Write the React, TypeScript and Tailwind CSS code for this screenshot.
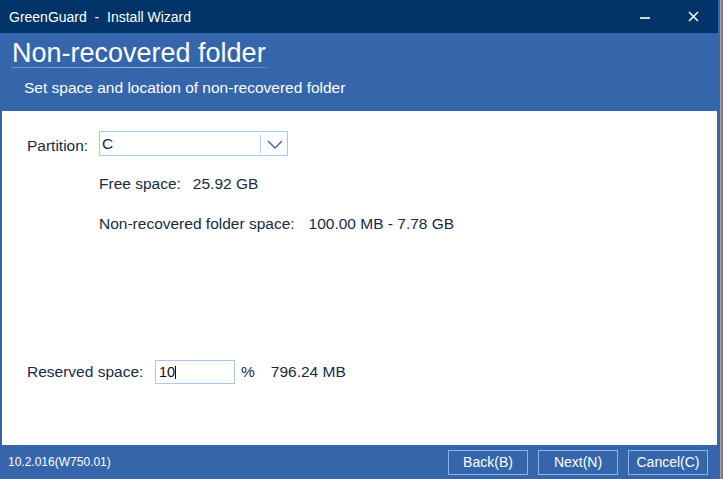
import React from "react";

export default function App() {
  const font = { fontFamily: '"Liberation Sans", Arial, sans-serif' };
  return (
    <div className="flex h-[479px] w-[723px] bg-[#7f7f7f]" style={font}>
      <div className="flex h-full w-[720px] flex-col bg-[#3566ab]">
        {/* Title bar */}
        <div className="flex h-[33px] w-[718px] shrink-0 items-center bg-[#003468] pl-[9px] text-[14px] leading-[16px] text-white">
          <span className="whitespace-pre">GreenGuard  -  Install Wizard</span>
          <div className="ml-auto flex items-center">
            <svg width="12" height="12" viewBox="0 0 12 12" className="mr-[37px] mt-[2px]">
              <line x1="1" y1="6" x2="11" y2="6" stroke="white" strokeWidth="1.6" />
            </svg>
            <svg width="11" height="11" viewBox="0 0 11 11" className="mr-[19px]">
              <line x1="1" y1="1" x2="10" y2="10" stroke="white" strokeWidth="1.6" />
              <line x1="10" y1="1" x2="1" y2="10" stroke="white" strokeWidth="1.6" />
            </svg>
          </div>
        </div>

        {/* Header */}
        <div className="flex h-[78px] shrink-0 flex-col pl-[11px] pt-[7px] text-white">
          <div className="flex w-fit flex-col">
            <div className="px-[1px] text-[27px] leading-[27px]">Non-recovered folder</div>
            <div className="h-px w-full bg-gradient-to-r from-[#6f95cb] via-[#93b3df] to-[#5f89c3]" />
          </div>
          <div className="ml-[13px] mt-[11px] text-[15.5px] leading-[18px]">
            Set space and location of non-recovered folder
          </div>
        </div>

        {/* Content */}
        <div className="ml-[2px] mr-[3px] flex flex-1 flex-col bg-white pl-[25px] text-[15.5px] leading-[18px] text-[#172a46]">
          <div className="mt-[20px] flex h-[25px] items-start">
            <div className="w-[72px] pt-[6px]">Partition:</div>
            <div className="flex h-[25px] w-[189px] items-start border border-[#a9c8e7] pl-[2px] pt-[3px]">
              <span className="flex-1">C</span>
              <div className="mt-[-0.5px] flex items-center">
                <div className="h-[18px] w-px bg-[#b8cfe6]" />
                <svg width="16" height="9" viewBox="0 0 16 9" className="ml-[6px] mr-[4px] mt-[2px]">
                  <polyline points="1,1 8,8 15,1" fill="none" stroke="#4a6ea6" strokeWidth="1.5" />
                </svg>
              </div>
            </div>
          </div>

          <div className="ml-[72px] mt-[19px] flex">
            <span>Free space:</span>
            <span className="ml-[12px]">25.92 GB</span>
          </div>

          <div className="ml-[72px] mt-[22px] flex">
            <span>Non-recovered folder space:</span>
            <span className="ml-[14px]">100.00 MB - 7.78 GB</span>
          </div>

          <div className="mb-[61px] mt-auto flex h-[24px] items-center">
            <div className="w-[128px]">Reserved space:</div>
            <div className="flex h-[24px] w-[80px] items-center border border-[#a9c8e7] pl-[3px] text-[14.5px] text-[#111]">
              <span>10</span>
              <span className="h-[13px] w-px bg-black" />
            </div>
            <span className="ml-[6px]">%</span>
            <span className="ml-[16px]">796.24 MB</span>
          </div>
        </div>

        {/* Footer */}
        <div className="flex h-[34px] shrink-0 items-center pl-[8px] pr-[12px] text-white">
          <span className="text-[12px]">10.2.016(W750.01)</span>
          <div className="ml-auto flex gap-[10px] text-[14px]">
            <button className="flex h-[25px] w-[80px] items-center justify-center border border-[#8db5ec] bg-[#3566ab] leading-[16px] text-white">
              Back(B)
            </button>
            <button className="flex h-[25px] w-[80px] items-center justify-center border border-[#8db5ec] bg-[#3566ab] leading-[16px] text-white">
              Next(N)
            </button>
            <button className="flex h-[25px] w-[80px] items-center justify-center border border-[#8db5ec] bg-[#3566ab] leading-[16px] text-white">
              Cancel(C)
            </button>
          </div>
        </div>
      </div>
      <div className="h-full w-[3px] border-l border-[#a3a3a3] bg-[#7d7d7d]" />
    </div>
  );
}
